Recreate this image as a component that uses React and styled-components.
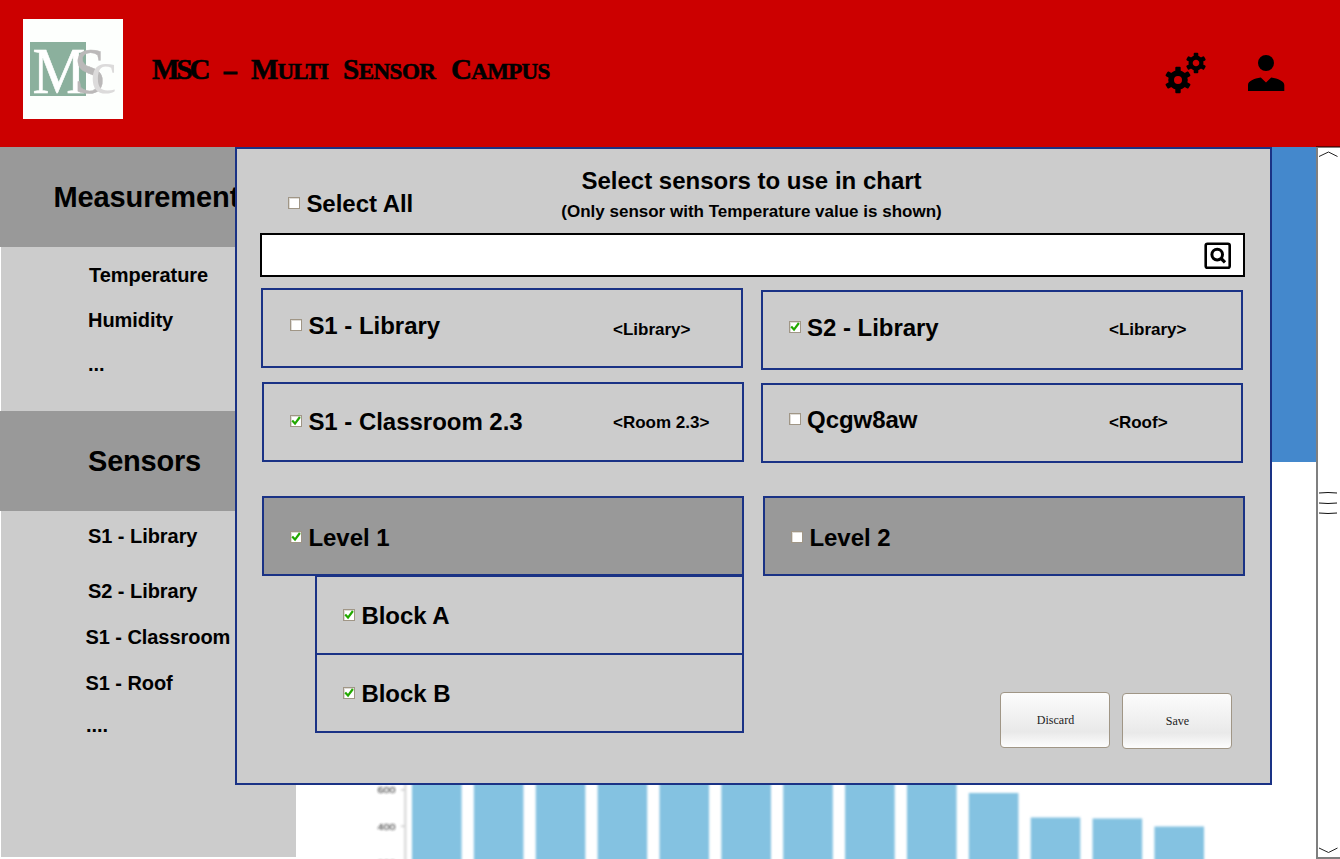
import React from "react";
import styled, { createGlobalStyle } from "styled-components";

const GlobalStyle = createGlobalStyle`
  * { box-sizing: border-box; }
  html, body { margin: 0; padding: 0; overflow: hidden; }
  body { background: #fff; font-family: "Liberation Sans", Arial, sans-serif; color: #000; }
`;

const Page = styled.div`
  position: relative;
  width: 1340px;
  height: 859px;
  display: flex;
  flex-direction: column;
  overflow: hidden;
`;

const Header = styled.header`
  flex: none;
  height: 147px;
  background: #cc0000;
  display: flex;
  align-items: flex-start;
  padding: 19px 55px 0 23px;
`;

const LogoBox = styled.svg`
  display: block;
  width: 100px;
  height: 100px;
  background: #fdfffd;
`;

const BrandTitle = styled.h1`
  margin: 31px 0 0 29px;
  display: flex;
  align-items: baseline;
  font-family: "Liberation Serif", "Times New Roman", serif;
  font-weight: bold;
  font-size: 23px;
  line-height: 38px;
  white-space: nowrap;
`;

const Word = styled.span`
  width: ${(p) => p.$width}px;
  letter-spacing: ${(p) => p.$spacing}px;
  -webkit-text-stroke: 0.6px #000;
  &::first-letter { font-size: 29px; }
`;

const BigWord = styled(Word)`
  font-size: 29px;
`;

const Dash = styled(Word)`
  -webkit-text-stroke: 1.2px #000;
  &::first-letter { font-size: 25px; }
`;

const HeaderIcons = styled.div`
  margin-left: auto;
  display: flex;
  gap: 40px;
  padding-top: 32px;
`;

const Icon = styled.svg`
  display: block;
  width: ${(p) => p.$w}px;
  height: ${(p) => p.$h}px;
`;

const Body = styled.div`
  flex: 1;
  display: flex;
`;

const Sidebar = styled.nav`
  width: 296px;
  height: 710px;
  display: flex;
  flex-direction: column;
`;

const SectionHead = styled.h2`
  margin: 0;
  flex: none;
  height: 100px;
  padding: 34px 0 0 ${(p) => p.$indent}px;
  background: #999;
  font-size: 29px;
  line-height: 32px;
  letter-spacing: ${(p) => p.$spacing}px;
`;

const SectionList = styled.ul`
  list-style: none;
  margin: 0 0 0 1px;
  padding: ${(p) => p.$top}px 0 0;
  background: #ccc;
  flex: ${(p) => (p.$height ? `0 0 ${p.$height}px` : "1")};
`;

const SectionItem = styled.li`
  font-size: 20px;
  font-weight: bold;
  line-height: 22px;
  letter-spacing: -0.05px;
  white-space: nowrap;
  padding-left: ${(p) => p.$indent}px;
  margin-bottom: ${(p) => p.$after}px;
`;

const Main = styled.main`
  flex: 1;
  display: flex;
  flex-direction: column;
`;

const Banner = styled.div`
  flex: none;
  height: 315px;
  background: #4488cc;
`;

const Chart = styled.svg`
  display: block;
  width: 1020px;
  height: 397px;
`;

const ScrollTrack = styled.div`
  width: 24px;
  margin-top: -1px;
  border: 2px solid rgba(0, 0, 0, 0.5);
  border-right: 0;
  display: flex;
  flex-direction: column;
  justify-content: space-between;
  padding: 3px 0 3px 1px;
`;

const Dialog = styled.section`
  position: absolute;
  left: 235px;
  top: 147px;
  width: 1037px;
  height: 638px;
  background: #ccc;
  border: 2px solid #1a3285;
`;

const DialogHead = styled.div`
  display: flex;
  height: 84px;
`;

const SelectAll = styled.label`
  width: 323px;
  padding: 41px 0 0 51px;
  display: flex;
  align-items: flex-start;
`;

const Titles = styled.div`
  width: 383px;
  margin-top: 18px;
  text-align: center;
  font-weight: bold;
  white-space: nowrap;
`;

const Title = styled.div`
  font-size: 24px;
  line-height: 27px;
`;

const Subtitle = styled.div`
  margin-top: 8px;
  font-size: 17px;
  line-height: 19px;
`;

const SearchField = styled.div`
  margin-left: 23px;
  width: 985px;
  height: 44px;
  border: 2px solid #000;
  background: #fff;
  display: flex;
  justify-content: flex-end;
  padding: 7px 12px 0 0;
`;

const Columns = styled.div`
  display: grid;
  grid-template-columns: 483px 484px;
  column-gap: 17px;
  padding-left: 24px;
`;

const Column = styled.div`
  display: flex;
  flex-direction: column;
`;

const Card = styled.div`
  width: ${(p) => p.$width || 482}px;
  height: 80px;
  margin: ${(p) => p.$gap}px 0 0 ${(p) => p.$shift || 0}px;
  padding: ${(p) => p.$top}px 0 0 ${(p) => p.$indent}px;
  border: 2px solid #1a3285;
  background: ${(p) => (p.$group ? "#999" : "#ccc")};
  display: flex;
  align-items: flex-start;
`;

const CardLabel = styled.span`
  margin-left: ${(p) => p.$gap || 6.4}px;
  font-size: 24px;
  font-weight: bold;
  line-height: 27px;
  letter-spacing: -0.03px;
  white-space: nowrap;
`;

const CardTag = styled.span`
  margin: ${(p) => p.$drop}px ${(p) => p.$right}px 0 auto;
  width: 100px;
  font-size: 17px;
  font-weight: bold;
  line-height: 19px;
  white-space: nowrap;
`;

const Box = styled.span`
  flex: none;
  width: 12px;
  height: 12px;
  margin-top: 7px;
  border: 1px solid #a09686;
  background: #fff;
  box-shadow: inset 1px 1px 0 #dedbd6;
  svg { display: block; width: 10px; height: 10px; }
`;

const Actions = styled.div`
  display: flex;
  align-items: flex-start;
  gap: 12px;
  margin: 116px 0 0 239px;
`;

const ActionButton = styled.button`
  width: 110px;
  height: 56px;
  margin: ${(p) => p.$drop || 0}px 0 0;
  padding: 0 0 0 1px;
  border: 1px solid #a09686;
  border-radius: 4px;
  background: linear-gradient(#fcfcfc 0%, #f3f3f3 35%, #e9e9e9 72%, #fdfdfd 100%);
  font: 12px/14px "Liberation Serif", "Times New Roman", serif;
  color: #1c1c1c;
`;

function Checkbox({ checked }) {
  return (
    <Box>
      {checked && (
        <svg viewBox="0 0 10 10">
          <path d="M1.2 4.6 L4 7.6 L8.9 1" fill="none" stroke="#22a800" strokeWidth="2.2" />
        </svg>
      )}
    </Box>
  );
}

function OptionCard({ label, checked, tag, tagDrop = 0, tagRight = 0, labelGap, ...card }) {
  return (
    <Card {...card}>
      <Checkbox checked={checked} />
      <CardLabel $gap={labelGap}>{label}</CardLabel>
      {tag && <CardTag $drop={tagDrop} $right={tagRight}>{tag}</CardTag>}
    </Card>
  );
}

function Logo() {
  return (
    <LogoBox viewBox="0 0 100 100" fontFamily="Liberation Serif, serif">
      <rect x="7" y="23" width="56" height="54" fill="#8bb09d" />
      <text x="9.5" y="74" fontSize="66" fill="#fff" stroke="#fff" strokeWidth="0.6" textLength="53" lengthAdjust="spacingAndGlyphs">M</text>
      <text x="51" y="74" fontSize="65" fill="#bbb9b9" stroke="#bbb9b9" strokeWidth="0.4" textLength="32" lengthAdjust="spacingAndGlyphs">S</text>
      <text x="67.5" y="74" fontSize="61" fill="#dcdbdb" textLength="26" lengthAdjust="spacingAndGlyphs">c</text>
    </LogoBox>
  );
}

function Gear({ cx, cy, body, outer, hole, tooth }) {
  return (
    <g transform={`translate(${cx} ${cy})`}>
      <circle r={(body + hole) / 2} fill="none" stroke="#000" strokeWidth={body - hole} />
      {[0, 60, 120, 180, 240, 300].map((a) => (
        <rect key={a} x={-tooth / 2} y={-outer} width={tooth} height={outer - hole - 1.5} rx="1" transform={`rotate(${a})`} />
      ))}
    </g>
  );
}

const BARS = [0, 0, 0, 0, 0, 0, 0, 0, 0, 331, 355.5, 356.5, 364.5];

function BarChart() {
  return (
    <Chart viewBox="0 0 1020 397">
      <defs>
        <filter id="soft" x="-5%" y="-5%" width="110%" height="110%">
          <feGaussianBlur stdDeviation="0.8" />
        </filter>
      </defs>
      <g filter="url(#soft)">
        <rect x="108" y="0" width="2.5" height="400" fill="#dcdcdc" />
        {BARS.map((top, i) => (
          <rect key={i} x={116 + i * 61.87} y={top} width="49.6" height={410 - top} fill="#84c2e1" />
        ))}
        {[328, 364.5, 401].map((y, i) => (
          <g key={y}>
            <rect x="105" y={y - 1} width="4" height="1.5" fill="#ccc" />
            <text x="99.5" y={y + 3.3} textAnchor="end" fontFamily="Liberation Sans, sans-serif" fontSize="9.5" textLength="18" lengthAdjust="spacingAndGlyphs" fill="#222">
              {600 - i * 200}
            </text>
          </g>
        ))}
      </g>
    </Chart>
  );
}

const MEASUREMENTS = [
  { name: "Temperature", indent: 88, after: 23 },
  { name: "Humidity", indent: 87, after: 22 },
  { name: "...", indent: 87, after: 0 },
];

const SENSORS = [
  { name: "S1 - Library", indent: 87, after: 33 },
  { name: "S2 - Library", indent: 87, after: 24 },
  { name: "S1 - Classroom", indent: 84.4, after: 24 },
  { name: "S1 - Roof", indent: 84.4, after: 20 },
  { name: "....", indent: 85, after: 0 },
];

export default function App() {
  return (
    <>
      <GlobalStyle />
      <Page>
        <Header>
          <Logo />
          <BrandTitle>
            <BigWord $width={72} $spacing={-3}>MSC</BigWord>
            <Dash $width={27} $spacing={0}>–</Dash>
            <Word $width={92} $spacing={-0.9}>MULTI</Word>
            <Word $width={108} $spacing={-0.5}>SENSOR</Word>
            <Word $width={100} $spacing={-0.7}>CAMPUS</Word>
          </BrandTitle>
          <HeaderIcons>
            <Icon $w={43} $h={44} viewBox="0 0 43 44">
              <Gear cx={13} cy={29} body={9.8} outer={13.2} hole={4} tooth={5.4} />
              <Gear cx={31} cy={12} body={7.5} outer={10.2} hole={3.3} tooth={4.6} />
            </Icon>
            <Icon $w={37} $h={44} viewBox="0 0 37 44">
              <circle cx="18" cy="12" r="8" />
              <path d="M0 40 V34 C0 30 6 27.6 12.8 26.5 L18 31.5 L23.2 26.5 C30 27.6 36.3 30 36.3 34 V40 Z" />
            </Icon>
          </HeaderIcons>
        </Header>

        <Body>
          <Sidebar>
            <SectionHead $indent={53.4} $spacing={-0.1}>Measurement</SectionHead>
            <SectionList $top={17} $height={164}>
              {MEASUREMENTS.map((m) => (
                <SectionItem key={m.name} $indent={m.indent} $after={m.after}>{m.name}</SectionItem>
              ))}
            </SectionList>
            <SectionHead $indent={88} $spacing={-0.2}>Sensors</SectionHead>
            <SectionList $top={14}>
              {SENSORS.map((s) => (
                <SectionItem key={s.name} $indent={s.indent} $after={s.after}>{s.name}</SectionItem>
              ))}
            </SectionList>
          </Sidebar>

          <Main>
            <Banner />
            <BarChart />
          </Main>

          <ScrollTrack>
            <Icon $w={20} $h={8} viewBox="0 0 20 8">
              <path d="M0 5.5 L9.5 1 L18.5 5.5" fill="none" stroke="#222" />
            </Icon>
            <Icon $w={20} $h={24} viewBox="0 0 20 24">
              <path d="M0 2 Q9 1 18 2 M0 12 Q9 13 18 12 M0 22 Q9 23 18 22" fill="none" stroke="#111" />
            </Icon>
            <Icon $w={20} $h={8} viewBox="0 0 20 8">
              <path d="M0 2 L9.5 6.5 L18.5 2" fill="none" stroke="#222" />
            </Icon>
          </ScrollTrack>
        </Body>

        <Dialog>
          <DialogHead>
            <SelectAll>
              <Checkbox />
              <CardLabel>Select All</CardLabel>
            </SelectAll>
            <Titles>
              <Title>Select sensors to use in chart</Title>
              <Subtitle>(Only sensor with Temperature value is shown)</Subtitle>
            </Titles>
          </DialogHead>

          <SearchField>
            <Icon $w={28} $h={28} viewBox="0 0 28 28">
              <rect x="2.7" y="1.8" width="24" height="24" rx="1.8" fill="none" stroke="#000" strokeWidth="2.6" />
              <circle cx="14.2" cy="12.6" r="5.3" fill="none" stroke="#000" strokeWidth="3" />
              <path d="M17.6 16 L22 20.4" stroke="#000" strokeWidth="3.2" />
            </Icon>
          </SearchField>

          <Columns>
            <Column>
              <OptionCard $gap={11} $top={22} $indent={27} label="S1 - Library" tag="<Library>" tagDrop={8} tagRight={28} />
              <OptionCard $gap={14} $shift={1} $top={24} $indent={26} label="S1 - Classroom 2.3" checked tag="<Room 2.3>" tagDrop={5} tagRight={29} />
              <OptionCard $gap={34} $shift={1} $top={26} $indent={26} $group label="Level 1" checked />
              <OptionCard $gap={-1} $shift={54} $width={429} $top={25} $indent={26} label="Block A" checked />
              <OptionCard $gap={-2} $shift={54} $width={429} $top={25} $indent={26} label="Block B" checked />
            </Column>
            <Column>
              <OptionCard $gap={13} $top={22} $indent={26} labelGap={6} label="S2 - Library" checked tag="<Library>" tagDrop={6} tagRight={32} />
              <OptionCard $gap={13} $top={21} $indent={26} labelGap={6} label="Qcgw8aw" tag="<Roof>" tagDrop={7} tagRight={32} />
              <OptionCard $gap={33} $shift={2} $top={26} $indent={26} $group label="Level 2" />
              <Actions>
                <ActionButton>Discard</ActionButton>
                <ActionButton $drop={1}>Save</ActionButton>
              </Actions>
            </Column>
          </Columns>
        </Dialog>
      </Page>
    </>
  );
}
